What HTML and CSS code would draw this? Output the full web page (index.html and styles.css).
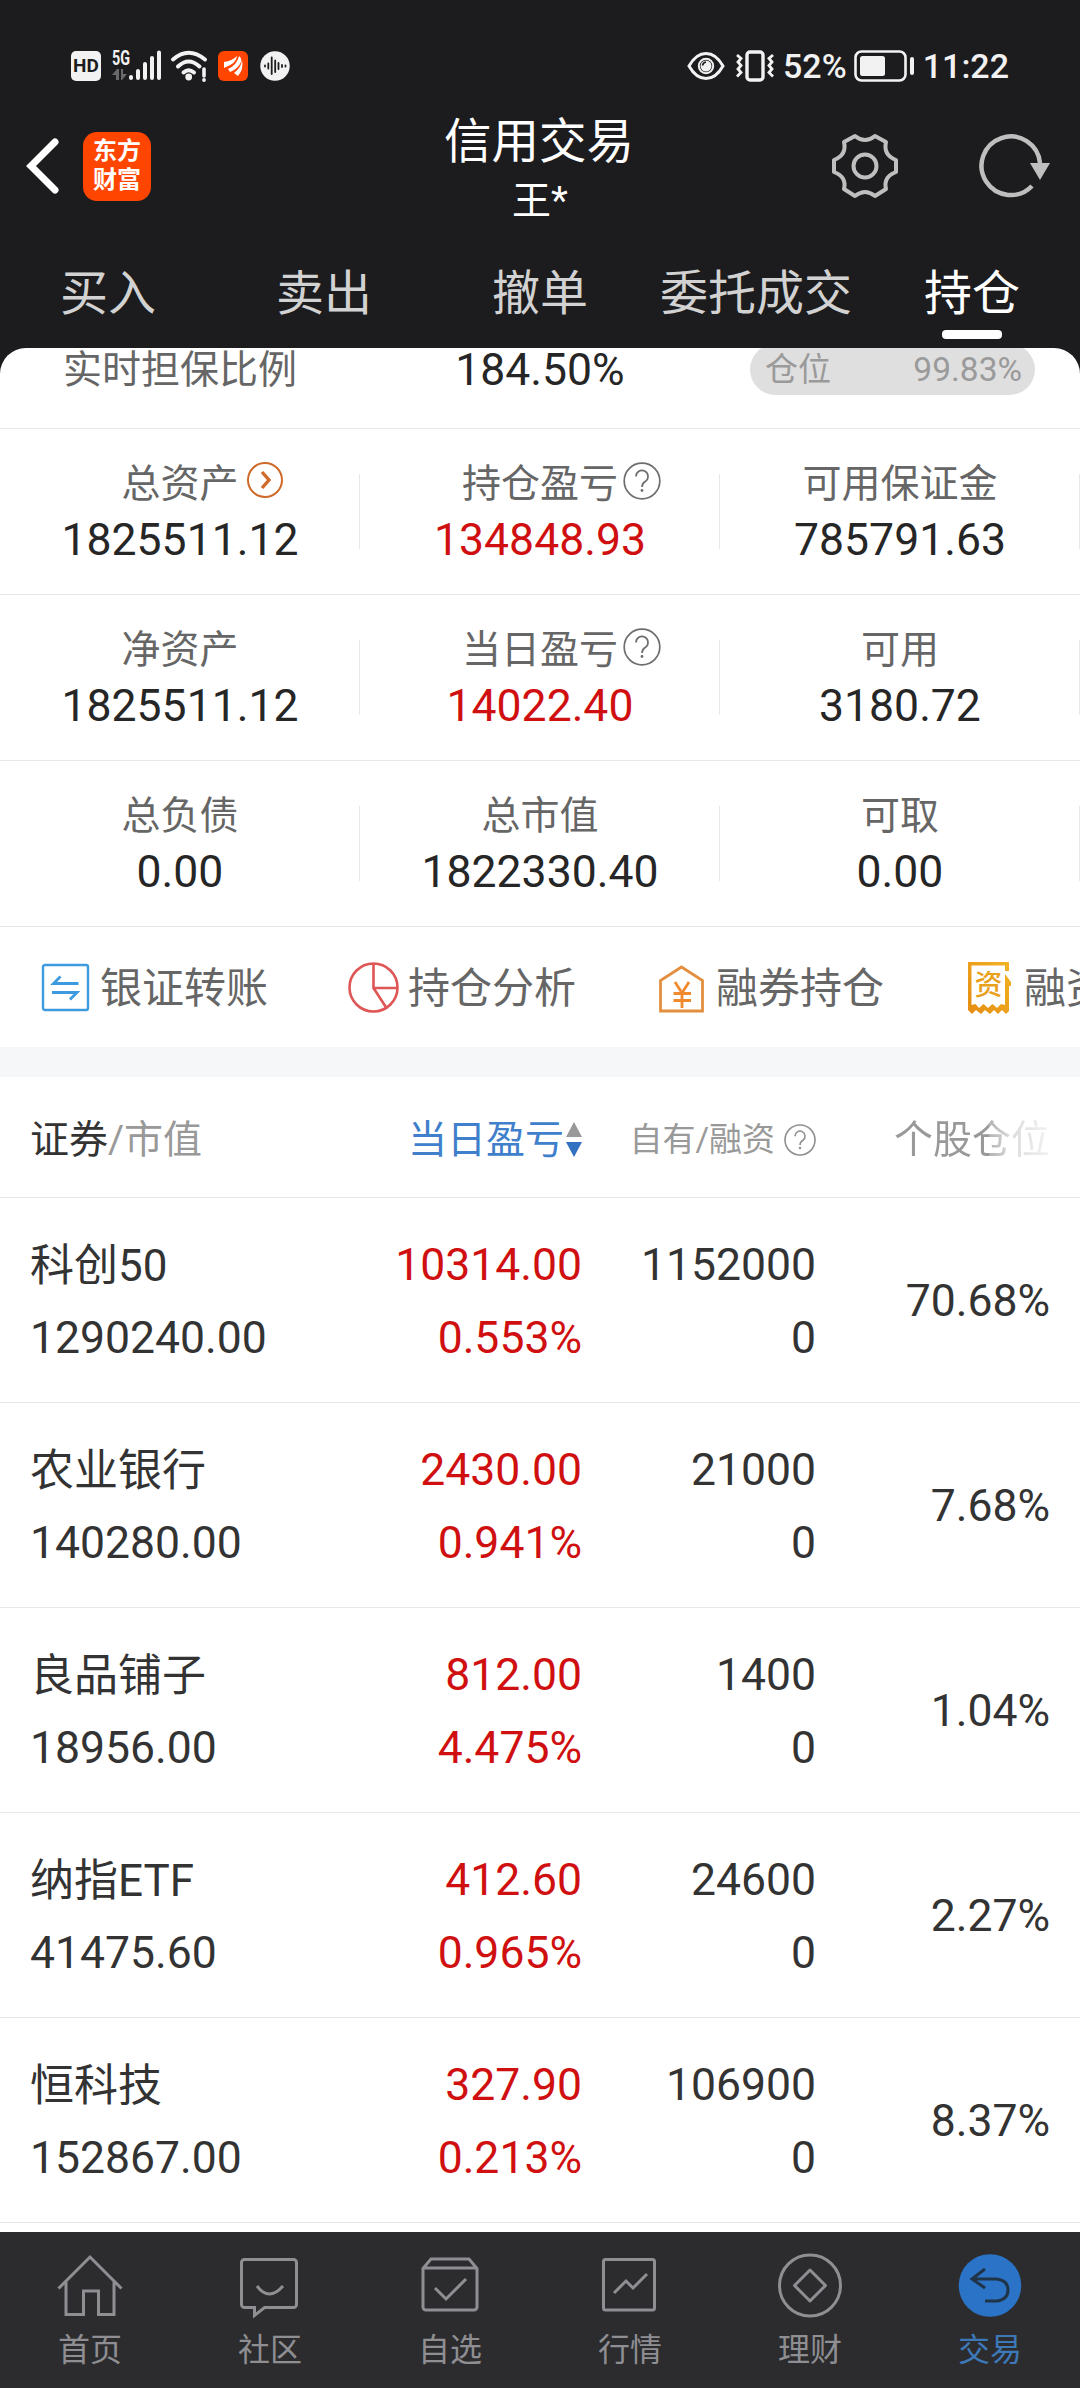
FILE: index.html
```html
<!DOCTYPE html>
<html lang="zh-CN">
<head>
<meta charset="utf-8">
<title>信用交易</title>
<link rel="stylesheet" href="styles.css">
</head>
<body>
<header class="top">
  <div class="status">
    <div class="status-left">
      <span class="hd">HD</span>
      <svg class="signal" width="50" height="34" viewBox="0 0 50 34">
        <text x="0" y="15.500" font-size="20" font-weight="700" textLength="18" lengthAdjust="spacingAndGlyphs" fill="#f2f2f2">5G</text>
        <g fill="#69696b"><path d="M0 26l5-6h2v11H4v-5zM9 20h2v5h4l-5 6H9z"/></g>
        <g stroke="#f2f2f2" stroke-width="4" stroke-linecap="round"><path d="M19 28v1M26 22v7M33 15v14M40 9v20M47 3.500v25.500"/></g>
      </svg>
      <svg class="wifi" width="36" height="34" viewBox="0 0 36 34">
        <g fill="none" stroke="#f2f2f2" stroke-width="4" stroke-linecap="round"><path d="M2 10.500Q17.500-3 34 10.500M7 17.500Q17.500 7.500 28.500 17.500M12.500 23.500Q17.500 19 23 23.500"/></g>
        <circle cx="17.700" cy="28" r="3.400" fill="#f2f2f2"/>
        <path d="M33 20v7" stroke="#f2f2f2" stroke-width="3.600" stroke-linecap="round"/><circle cx="33" cy="31" r="1.900" fill="#f2f2f2"/>
      </svg>
      <svg class="app" width="30" height="30" viewBox="0 0 30 30">
        <rect width="30" height="30" rx="6" fill="#ff4500"/>
        <path fill="#fff" d="M6 11Q14 10 19 5Q19 12 6 17ZM10 18Q19 14 21 5Q24 7 23 11Q20 18 12 21ZM16 22Q23 17 24 9Q26 18 20 25Z"/>
      </svg>
      <svg class="wave" width="30" height="30" viewBox="0 0 30 30">
        <circle cx="15" cy="15" r="14.700" fill="#f2f2f2"/>
        <g stroke="#1c1c1e" stroke-width="1.800" stroke-linecap="round"><path d="M5 14.500v1M8.300 12.500v5M11.700 6.500v16.500M15.200 9.500v11.500M18.500 12v6M22 14v2M25.500 14.500v1"/></g>
      </svg>
    </div>
    <div class="status-right">
      <svg width="38" height="30" viewBox="0 0 38 30"><g fill="none" stroke="#f2f2f2" stroke-width="3"><path d="M2 15Q9 2.500 19 2.500T36 15Q29 27.500 19 27.500T2 15Z"/></g><circle cx="19" cy="15" r="7.200" fill="none" stroke="#f2f2f2" stroke-width="2"/><circle cx="19" cy="15" r="5.500" fill="#f2f2f2"/><path d="M15.500 14.500q.5-3 3.500-3.500" stroke="#1c1c1e" stroke-width="1.600" fill="none"/></svg>
      <svg class="vibrate" width="40" height="32" viewBox="0 0 40 32"><rect x="12" y="2" width="16" height="28" rx="3" fill="none" stroke="#f2f2f2" stroke-width="3.400"/><path d="M2 5l4 3.500-3 3.500 3 3.500-3 3.500 3 3.500-4 4M38 5l-4 3.500 3 3.500-3 3.500 3 3.500-3 3.500 4 4" fill="none" stroke="#f2f2f2" stroke-width="2.800"/></svg>
      <span class="battery-text">52%</span>
      <svg class="battery" width="61" height="32" viewBox="0 0 61 32"><rect x="1.500" y="1.500" width="50" height="29" rx="6" fill="none" stroke="#f2f2f2" stroke-width="2.600"/><rect x="6" y="6" width="25" height="20" rx="2.500" fill="#f2f2f2"/><path d="M58 9v14" stroke="#f2f2f2" stroke-width="4" stroke-linecap="round"/></svg>
      <span class="clock">11:22</span>
    </div>
  </div>

  <div class="titlebar">
    <div class="title-left">
      <svg width="32" height="56" viewBox="0 0 32 56"><path d="M28 4L4 28l24 24" fill="none" stroke="#fff" stroke-width="7" stroke-linecap="round"/></svg>
      <div class="brand"><span>东方</span><span>财富</span></div>
    </div>
    <div class="title-mid"><h1>信用交易</h1><p>王*</p></div>
    <div class="title-right">
      <svg width="66" height="66" viewBox="0 0 66 66"><g fill="none" stroke="#bfbfbf" stroke-width="4"><path stroke-linejoin="round" d="M23 3Q33 11 43 3L54 9Q51 22 64 27V39Q51 44 54 56L43 63Q33 55 23 63L12 56Q15 44 2 39V27Q15 22 12 9Z"/><circle cx="33" cy="33" r="11.500"/></g></svg>
      <svg width="71" height="66" viewBox="0 0 71 66"><path d="M61 30A29.300 29.300 0 1 0 53 53" fill="none" stroke="#bfbfbf" stroke-width="4.500"/><path d="M51 30h20l-10 17z" fill="#bfbfbf"/></svg>
    </div>
  </div>

  <nav class="tabs">
    <a>买入</a><a>卖出</a><a>撤单</a><a>委托成交</a><a class="on">持仓</a>
  </nav>
</header>

<main class="panel">
  <section class="ratio">
    <span class="label">实时担保比例</span>
    <span class="num">184.50%</span>
    <span class="pill"><span>仓位</span><span class="pct">99.83%</span></span>
  </section>

  <section class="grid">
    <div class="cell"><span class="label">总资产<svg class="hint go" width="38" height="38" viewBox="0 0 38 38"><g fill="none" stroke="#cf6a2b"><circle cx="19" cy="19" r="17" stroke-width="2"/><path d="M16 11l7 8-7 8" stroke-width="3.400"/></g></svg></span><span class="num">1825511.12</span></div>
    <div class="cell"><span class="label">持仓盈亏<svg class="hint" width="38" height="38" viewBox="0 0 38 38"><g fill="none" stroke="#6e6e6e" stroke-width="1.700"><circle cx="19" cy="19" r="17.800"/><path d="M13 14.500a6 6 0 1 1 9.500 4.800Q19 21.500 19 25"/></g><circle cx="19" cy="28.500" r="1.400" fill="#6e6e6e"/></svg></span><span class="num red">134848.93</span></div>
    <div class="cell"><span class="label">可用保证金</span><span class="num">785791.63</span></div>
    <div class="cell"><span class="label">净资产</span><span class="num">1825511.12</span></div>
    <div class="cell"><span class="label">当日盈亏<svg class="hint" width="38" height="38" viewBox="0 0 38 38"><g fill="none" stroke="#6e6e6e" stroke-width="1.700"><circle cx="19" cy="19" r="17.800"/><path d="M13 14.500a6 6 0 1 1 9.500 4.800Q19 21.500 19 25"/></g><circle cx="19" cy="28.500" r="1.400" fill="#6e6e6e"/></svg></span><span class="num red">14022.40</span></div>
    <div class="cell"><span class="label">可用</span><span class="num">3180.72</span></div>
    <div class="cell"><span class="label">总负债</span><span class="num">0.00</span></div>
    <div class="cell"><span class="label">总市值</span><span class="num">1822330.40</span></div>
    <div class="cell"><span class="label">可取</span><span class="num">0.00</span></div>
  </section>

  <section class="actions">
    <a><svg width="51" height="51" viewBox="0 0 51 51"><rect x="3" y="3" width="45" height="45" rx="2" fill="none" stroke="#3d9ade" stroke-width="2.400"/><path d="M38.500 21.500H13.500l7-7M12 30.500h25l-7 7" fill="none" stroke="#3d9ade" stroke-width="2.800"/></svg><span>银证转账</span></a>
    <a><svg width="51" height="51" viewBox="0 0 51 51"><g fill="none" stroke="#df5656" stroke-width="2.600"><circle cx="25.500" cy="25.500" r="24"/><path d="M25.500 1.500V26H49.500M25.500 26l13 20"/></g></svg><span>持仓分析</span></a>
    <a><svg width="51" height="51" viewBox="0 0 51 51"><path d="M4.500 49V18.500L25.500 5 46.500 18.500V49z" fill="none" stroke="#e48f3f" stroke-width="2.800"/><path d="M19 20l7 11 7-11M26 31v15M17.500 31.500h17.500M17.500 38.500h17.500" fill="none" stroke="#f08a2c" stroke-width="2.800"/></svg><span>融券持仓</span></a>
    <a><svg width="51" height="51" viewBox="0 0 51 51"><defs><linearGradient id="gold" x1="0" x2="1" y1="1" y2="0"><stop offset="0" stop-color="#e58c12"/><stop offset="1" stop-color="#f2b425"/></linearGradient></defs><path fill="url(#gold)" d="M4 0H45V9H41V3.500H7.500V43l4-1 3.500 4 4.500-4 4.500 4 4.500-4 4.500 4 4-4 4 1V12l6 8v4h-2v25l-3 3-4-4-4 4-4-4-4 4-5-4-4 4-5-4-4 4-4-4z"/><text x="10.500" y="33" font-size="28" font-weight="500" fill="#e9a11c">资</text></svg><span>融资持仓</span></a>
  </section>

  <div class="band"></div>

  <section class="table">
    <div class="row head">
      <div class="c1"><b>证券</b>/市值</div>
      <div class="c2">当日盈亏<svg width="16" height="36" viewBox="0 0 16 36"><path d="M8 0l8 15H0z" fill="#999"/><path d="M0 20h16l-8 15z" fill="#3270c0"/></svg></div>
      <div class="c3">自有/融资<svg width="32" height="32" viewBox="0 0 38 38"><g fill="none" stroke="#909090" stroke-width="1.900"><circle cx="19" cy="19" r="17.800"/><path d="M13 14.500a6 6 0 1 1 9.500 4.800Q19 21.500 19 25"/></g><circle cx="19" cy="28.500" r="1.500" fill="#909090"/></svg></div>
      <div class="c4"><span class="fade">个股仓位</span></div>
    </div>
    <div class="row"><div class="c1"><span>科创50</span><span class="num">1290240.00</span></div><div class="c2"><span>10314.00</span><span>0.553%</span></div><div class="c3"><span>1152000</span><span>0</span></div><div class="c4">70.68%</div></div>
    <div class="row"><div class="c1"><span>农业银行</span><span class="num">140280.00</span></div><div class="c2"><span>2430.00</span><span>0.941%</span></div><div class="c3"><span>21000</span><span>0</span></div><div class="c4">7.68%</div></div>
    <div class="row"><div class="c1"><span>良品铺子</span><span class="num">18956.00</span></div><div class="c2"><span>812.00</span><span>4.475%</span></div><div class="c3"><span>1400</span><span>0</span></div><div class="c4">1.04%</div></div>
    <div class="row"><div class="c1"><span>纳指ETF</span><span class="num">41475.60</span></div><div class="c2"><span>412.60</span><span>0.965%</span></div><div class="c3"><span>24600</span><span>0</span></div><div class="c4">2.27%</div></div>
    <div class="row"><div class="c1"><span>恒科技</span><span class="num">152867.00</span></div><div class="c2"><span>327.90</span><span>0.213%</span></div><div class="c3"><span>106900</span><span>0</span></div><div class="c4">8.37%</div></div>
  </section>
</main>

<footer class="bottom">
  <a><svg width="66" height="66" viewBox="0 0 66 66"><path d="M1.500 34.500L33 3l31.500 31.500M9 28v32.500h17.500V37h15v23.500H57V28"/></svg>首页</a>
  <a><svg width="66" height="66" viewBox="0 0 66 66"><path d="M7.500 5.500h49a3 3 0 0 1 3 3v42a3 3 0 0 1-3 3H27.500l-10 8v-8h-10a3 3 0 0 1-3-3v-42a3 3 0 0 1 3-3zM20 32q12 16 26 0"/></svg>社区</a>
  <a><svg width="66" height="66" viewBox="0 0 66 66"><path d="M6 14.500l8-9.500h38l8 9.500V53a3 3 0 0 1-3 3H9a3 3 0 0 1-3-3zM6 14h54M18 34l11 11 20-20"/></svg>自选</a>
  <a><svg width="66" height="66" viewBox="0 0 66 66"><rect x="6.500" y="5.500" width="51" height="50.500" rx="2"/><path d="M17 39l12-12 7 7 14-14"/></svg>行情</a>
  <a><svg width="66" height="66" viewBox="0 0 66 66"><circle cx="33" cy="31.500" r="30.500"/><path stroke-linejoin="round" d="M33 16l15.500 15.500L33 47 17.500 31.500z"/></svg>理财</a>
  <a class="on"><svg width="66" height="66" viewBox="0 0 66 66"><circle class="disc" cx="33" cy="31.500" r="31.300"/><path class="arrow" d="M28 15L15 25l13 9M16 25h24q11 1.500 11 11T40 47H28"/></svg>交易</a>
</footer>
</body>
</html>
```
FILE: styles.css
```css
* { box-sizing: border-box; }
body {
  margin: 0;
  width: 1080px;
  height: 2388px;
  overflow: hidden;
  display: flex;
  flex-direction: column;
  background: #1c1c1e;
  color: #262626;
  font-family: Roboto, "Noto Sans CJK SC", sans-serif;
}
svg { display: block; flex: none; overflow: visible; }

/* header */
.top { flex: none; height: 348px; color: #fff; }
.status { height: 100px; padding: 32px 71px 0 71px; display: flex; justify-content: space-between; }
.status-left, .status-right { height: 68px; display: flex; align-items: center; }
.hd { width: 30px; height: 30px; border-radius: 5px; background: #f2f2f2; color: #1c1c1e; font-size: 19px; font-weight: 700; line-height: 30px; text-align: center; }
.signal { margin-left: 11px; }
.wifi { margin-left: 9px; }
.app { margin-left: 11px; }
.wave { margin-left: 12px; }
.vibrate { margin-left: 10px; }
.battery-text, .clock { font-size: 34px; font-weight: 500; line-height: 68px; color: #f2f2f2; }
.battery-text { margin-left: 8px; }
.battery { margin-left: 7px; }
.clock { margin-left: 8px; }

.titlebar { height: 132px; display: grid; grid-template-columns: 1fr 200px 1fr; }
.title-left { display: flex; align-items: center; padding-left: 27px; gap: 24px; }
.brand { width: 68px; height: 69px; border-radius: 14px; background: #ff4500; display: flex; flex-direction: column; justify-content: center; text-align: center; font-size: 24px; line-height: 29px; font-weight: 700; }
.title-mid { padding-top: 12px; text-align: center; }
.title-mid h1 { margin: 0 0 0 -2px; font-size: 47.5px; font-weight: 400; line-height: 60px; }
.title-mid p { margin: 0; font-size: 39px; line-height: 58px; }
.title-right { display: flex; align-items: center; justify-content: flex-end; padding-right: 30px; gap: 81px; }

.tabs { height: 116px; display: grid; grid-template-columns: repeat(5, 1fr); }
.tabs a { display: flex; flex-direction: column; align-items: center; padding-top: 32px; font-size: 48px; line-height: 60px; color: #d2d2d2; white-space: nowrap; }
.tabs .on { color: #fff; }
.tabs .on::after { content: ""; width: 60px; height: 9px; margin-top: 6px; border-radius: 4px; background: #fff; }

/* account summary */
.panel { flex: none; height: 1884px; overflow: hidden; background: #fff; border-radius: 26px 26px 0 0; }
.ratio { height: 81px; display: grid; grid-template-columns: repeat(3, 1fr); justify-items: center; align-items: start; border-bottom: 1px solid #e8e8e8; line-height: 44px; }
.label { font-size: 39px; color: #666; }
.num { font-size: 44.5px; }
.pill { justify-self: end; margin: -4px 45px 0 0; width: 285px; height: 51px; padding: 0 13px 0 15px; border-radius: 26px; background: #dfdfdf; display: flex; justify-content: space-between; font-size: 33px; line-height: 51px; color: #9a9a9a; }
.pct { font-size: 33.5px; }
.grid { display: grid; grid-template-columns: repeat(3, 1fr); }
.cell { height: 166px; padding-top: 30px; display: flex; flex-direction: column; align-items: center; border-bottom: 1px solid #e8e8e8; background: linear-gradient(#e8e8e8, #e8e8e8) right 0 top 45px / 1px 75px no-repeat; }
.cell .label { position: relative; line-height: 50px; }
.cell .num { line-height: 62px; }
.hint { position: absolute; left: 100%; top: 3px; margin-left: 5px; }
.go { margin-left: 7px; top: 2px; }
.red { color: #d01010; }

.actions { height: 120px; padding: 0 0 0 40px; display: flex; align-items: center; gap: 80px; overflow: hidden; white-space: nowrap; }
.actions a { flex: none; display: flex; align-items: center; gap: 9px; font-size: 42px; line-height: 60px; color: #666; }
.actions span { padding-top: 4px; }
.band { height: 30px; background: #f5f7f9; }

/* holdings */
.row { height: 205px; padding: 0 30px; display: grid; grid-template-columns: 300px 252px 234px 234px; border-bottom: 1px solid #e8e8e8; color: #333; font-size: 44.5px; }
.row > div { display: flex; flex-direction: column; align-items: flex-end; padding-top: 31px; line-height: 73px; }
.row > .c1 { align-items: flex-start; padding-top: 32px; font-size: 44px; line-height: 72px; }
.row > .c2 { color: #d01010; }
.row > .c4 { justify-content: center; padding-top: 3px; }
.head { height: 121px; font-size: 39px; color: #999; }
.head > div, .head > .c1 { flex-direction: row; align-items: center; justify-content: flex-end; padding: 6px 0 0; font-size: 39px; line-height: 50px; white-space: nowrap; }
.head > .c1 { justify-content: flex-start; }
.head b { font-weight: 400; color: #333; }
.head > .c2 { color: #3f7fcc; gap: 2px; }
.head > .c3 { font-size: 33px; gap: 9px; }
.head > .c4 { justify-content: flex-end; padding-top: 6px; }
.fade { -webkit-mask-image: linear-gradient(90deg, #000 61%, rgba(0,0,0,.75) 61%, rgba(0,0,0,.35) 75%, rgba(0,0,0,.12)); mask-image: linear-gradient(90deg, #000 61%, rgba(0,0,0,.75) 61%, rgba(0,0,0,.35) 75%, rgba(0,0,0,.12)); }

/* bottom navigation */
.bottom { flex: none; height: 156px; background: #2c2c2e; display: grid; grid-template-columns: repeat(6, 1fr); }
.bottom a { padding-top: 22px; display: flex; flex-direction: column; align-items: center; font-size: 32px; line-height: 60px; color: #8e8e93; }
.bottom svg { fill: none; stroke: #8e8e93; stroke-width: 3; }
.bottom .on { color: #3d78b8; }
.bottom .disc { fill: #2b73c6; stroke: none; }
.bottom .arrow { stroke: #203448; }
```
